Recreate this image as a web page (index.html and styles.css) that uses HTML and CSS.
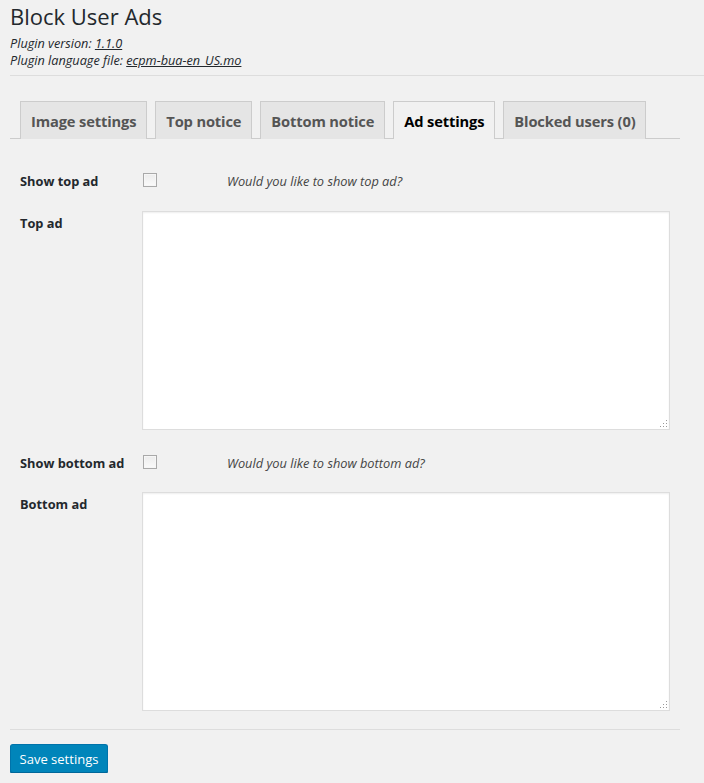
FILE: index.html
```html
<!DOCTYPE html>
<html>
<head>
<meta charset="utf-8">
<link rel="stylesheet" href="styles.css">
</head>
<body>
<div class="wrap">
  <div class="header">
    <h1 class="title">Block User Ads</h1>
    <p class="meta">Plugin version: <a href="#">1.1.0</a></p>
    <p class="meta">Plugin language file: <a href="#">ecpm-bua-en_US.mo</a></p>
  </div>
  <div class="content">
    <nav class="tabs">
      <a class="tab" href="#">Image settings</a>
      <a class="tab" href="#">Top notice</a>
      <a class="tab" href="#">Bottom notice</a>
      <a class="tab active" href="#">Ad settings</a>
      <a class="tab" href="#">Blocked users (0)</a>
    </nav>
    <form class="form">
      <div class="row row-check">
        <label class="label">Show top ad</label>
        <span class="check"></span>
        <span class="desc">Would you like to show top ad?</span>
      </div>
      <div class="row row-area">
        <label class="label">Top ad</label>
        <div class="area"><span class="grip"></span></div>
      </div>
      <div class="row row-check">
        <label class="label">Show bottom ad</label>
        <span class="check"></span>
        <span class="desc">Would you like to show bottom ad?</span>
      </div>
      <div class="row row-area row-area-last">
        <label class="label">Bottom ad</label>
        <div class="area"><span class="grip"></span></div>
      </div>
      <div class="divider"></div>
      <button type="button" class="btn">Save settings</button>
    </form>
  </div>
</div>
</body>
</html>
```
FILE: styles.css
```css
html, body {
  margin: 0;
  padding: 0;
  background: #f1f1f1;
}
body {
  font-family: "Open Sans", "Noto Sans", sans-serif;
  color: #23282d;
  font-size: 13px;
}
.wrap {
  padding-left: 10px;
}
.header {
  border-bottom: 1px solid #ddd;
  padding-bottom: 6px;
}
.title {
  margin: 0;
  padding-top: 2px;
  font-size: 22px;
  font-weight: 400;
  line-height: 29px;
  color: #23282d;
}
.meta {
  margin: 0;
  font-style: italic;
  font-size: 12.7px;
  line-height: 17px;
  color: #23282d;
}
.meta:first-of-type { margin-top: 4px; }
.meta a {
  color: #23282d;
  text-decoration: underline;
}
.content {
  width: 670px;
}
.tabs {
  display: flex;
  gap: 8px;
  margin-top: 25px;
  padding-left: 10px;
  border-bottom: 1px solid #ccc;
  height: 37px;
}
.tab {
  display: block;
  box-sizing: border-box;
  height: 38px;
  padding: 0 10px;
  line-height: 38px;
  font-size: 14.7px;
  font-weight: 700;
  color: #555;
  background: #e5e5e5;
  border: 1px solid #ccc;
  border-bottom: none;
  text-decoration: none;
  letter-spacing: -0.15px;
}
.tab.active {
  background: #f1f1f1;
  color: #000;
  position: relative;
  z-index: 1;
}
.form {
  display: flex;
  flex-direction: column;
  padding-left: 10px;
}
.row {
  display: flex;
  align-items: flex-start;
}
.label {
  width: 122px;
  flex-shrink: 0;
  font-weight: 700;
  font-size: 12.8px;
  color: #23282d;
}
.row-check {
  margin-top: 34px;
  height: 14px;
  align-items: center;
}
.row-check + .row-area { margin-top: 24px; }
.row-area + .row-check { margin-top: 25px; }
.row-check + .row-area-last { margin-top: 23px; }
.row-check .label { line-height: 14px; margin-top: 1px; }
.check {
  display: block;
  width: 12px;
  height: 12px;
  margin-left: 1px;
  border: 1px solid #a9a9a9;
  background: linear-gradient(#ececec, #fafafa);
  box-shadow: inset 0 0 0 1px #f6f6f6;
}
.desc {
  margin-left: 70px;
  font-style: italic;
  font-size: 12.8px;
  color: #444;
  margin-top: 1px;
}
.row-area .label {
  padding-top: 3px;
}
.area {
  position: relative;
  width: 526px;
  height: 217px;
  background: #fff;
  border: 1px solid #ddd;
  box-shadow: inset 0 1px 2px rgba(0,0,0,0.07);
}
.grip {
  position: absolute;
  right: 2px;
  bottom: 2px;
  width: 8px;
  height: 8px;
  background:
    radial-gradient(circle, #999 0.8px, transparent 1px) 0 0 / 3px 3px;
  clip-path: polygon(100% 0, 100% 100%, 0 100%);
}
.divider {
  margin-top: 18px;
  margin-left: -10px;
  border-top: 1px solid #ddd;
}
.btn {
  align-self: flex-start;
  margin-top: 14px;
  margin-left: -10px;
  width: 98px;
  height: 29px;
  padding: 0;
  font-family: "Open Sans", "Noto Sans", sans-serif;
  font-size: 13px;
  color: #fff;
  background: #0085ba;
  border: 1px solid #0073aa;
  border-bottom-color: #006799;
  border-radius: 3px;
  box-shadow: 0 1px 0 #006799;
}
```
